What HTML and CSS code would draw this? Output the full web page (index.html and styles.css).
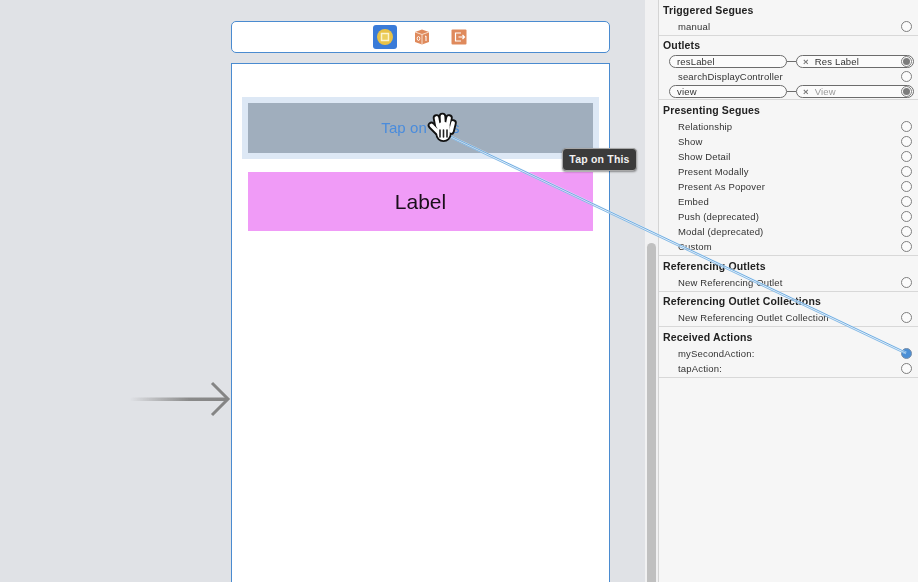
FILE: index.html
```html
<!DOCTYPE html>
<html lang="en">
<head>
  <meta charset="UTF-8">
  <title>Storyboard Connections</title>
  <link rel="stylesheet" href="styles.css">
</head>
<body>
  <div class="app">
    <main class="canvas">
      <svg class="entry-arrow" width="102" height="36" viewBox="0 0 102 36">
        <defs>
          <linearGradient id="arrowFade" x1="0" x2="1" y1="0" y2="0">
            <stop offset="0" stop-color="#8a8a8a" stop-opacity="0"></stop>
            <stop offset="0.6" stop-color="#8a8a8a"></stop>
            <stop offset="1" stop-color="#858585"></stop>
          </linearGradient>
        </defs>
        <rect x="0" y="16.500" width="98" height="3.500" fill="url(#arrowFade)"></rect>
        <path d="M82 2 L98 18 L82 34" fill="none" stroke="#858585" stroke-width="3"></path>
      </svg>

      <div class="scene-dock">
        <span class="dock-icon dock-active">
          <svg width="24" height="24" viewBox="0 0 24 24">
            <circle cx="12" cy="12" r="8" fill="#e9c246"></circle>
            <rect x="8.500" y="8.500" width="7" height="7" fill="#eccf5e" stroke="#fbf3cf" stroke-width="1.500"></rect>
          </svg>
        </span>
        <span class="dock-icon">
          <svg width="18" height="18" viewBox="0 0 18 18">
            <path d="M9 1.500 L16 4 V14 L9 16.500 L2 14 V4 Z" fill="#df8a5c"></path>
            <path d="M9 6.500 V16.500 M2 4 L9 6.500 L16 4" fill="none" stroke="#fbe6d8" stroke-width="0.900"></path>
            <ellipse cx="5.500" cy="10.500" rx="1.300" ry="2" fill="none" stroke="#fff" stroke-width="0.900"></ellipse>
            <path d="M12 8.500 L13 8 V13" fill="none" stroke="#fff" stroke-width="1"></path>
          </svg>
        </span>
        <span class="dock-icon">
          <svg width="18" height="18" viewBox="0 0 18 18">
            <rect x="1.500" y="1.500" width="15" height="15" rx="1" fill="#df8a5c"></rect>
            <path d="M11 5 H5.500 V13 H11 M8.500 9 H14.500 M12.500 7 L14.500 9 L12.500 11" fill="none" stroke="#fff" stroke-width="1.200"></path>
          </svg>
        </span>
      </div>

      <section class="device">
        <div class="button-selection">
          <div class="tap-button">Tap on This</div>
        </div>
        <div class="res-label">Label</div>
      </section>
    </main>

    <div class="scroller"><div class="scroller-thumb"></div></div>

    <aside class="inspector">
      <section class="group">
        <h4>Triggered Segues</h4>
        <div class="row"><span>manual</span><i class="radio"></i></div>
      </section>

      <section class="group group-outlets">
        <h4>Outlets</h4>
        <div class="row row-linked">
          <span class="pill pill-name">resLabel</span><b class="wire"></b>
          <span class="pill pill-target"><span class="target-name"><em>×</em>Res Label</span><i class="radio radio-on"></i></span>
        </div>
        <div class="row"><span>searchDisplayController</span><i class="radio"></i></div>
        <div class="row row-linked">
          <span class="pill pill-name">view</span><b class="wire"></b>
          <span class="pill pill-target target-dim"><span class="target-name"><em>×</em>View</span><i class="radio radio-on"></i></span>
        </div>
      </section>

      <section class="group">
        <h4>Presenting Segues</h4>
        <div class="row"><span>Relationship</span><i class="radio"></i></div>
        <div class="row"><span>Show</span><i class="radio"></i></div>
        <div class="row"><span>Show Detail</span><i class="radio"></i></div>
        <div class="row"><span>Present Modally</span><i class="radio"></i></div>
        <div class="row"><span>Present As Popover</span><i class="radio"></i></div>
        <div class="row"><span>Embed</span><i class="radio"></i></div>
        <div class="row"><span>Push (deprecated)</span><i class="radio"></i></div>
        <div class="row"><span>Modal (deprecated)</span><i class="radio"></i></div>
        <div class="row"><span>Custom</span><i class="radio"></i></div>
      </section>

      <section class="group">
        <h4>Referencing Outlets</h4>
        <div class="row"><span>New Referencing Outlet</span><i class="radio"></i></div>
      </section>

      <section class="group group-tight">
        <h4>Referencing Outlet Collections</h4>
        <div class="row"><span>New Referencing Outlet Collection</span><i class="radio"></i></div>
      </section>

      <section class="group">
        <h4>Received Actions</h4>
        <div class="row"><span>mySecondAction:</span><i class="radio radio-target"></i></div>
        <div class="row"><span>tapAction:</span><i class="radio"></i></div>
      </section>
    </aside>
  </div>

  <svg class="drag-layer" width="918" height="582" viewBox="0 0 918 582">
    <path d="M447 135 L906 353" stroke="#e4f0fa" stroke-width="3" opacity="0.7"></path>
    <path d="M447 134.300 L906 352.300" stroke="#6fade2" stroke-width="1"></path>
    <path d="M446 135.700 L905 353.700" stroke="#6fade2" stroke-width="0.800"></path>
    <g fill="none" stroke-linecap="round">
      <g stroke="#111" stroke-width="7.500">
        <path d="M439 133 L431.500 125.500"></path>
        <path d="M438 126 L436.500 118"></path>
        <path d="M443 126 L442.500 116.500"></path>
        <path d="M447.500 126 L449 118"></path>
        <path d="M451 131 L453 123"></path>
        <path d="M443.500 128 V134" stroke-width="16"></path>
      </g>
      <g stroke="#fff" stroke-width="3.800">
        <path d="M439 133 L431.500 125.500"></path>
        <path d="M438 126 L436.500 118"></path>
        <path d="M443 126 L442.500 116.500"></path>
        <path d="M447.500 126 L449 118"></path>
        <path d="M451 131 L453 123"></path>
        <path d="M443.500 128 V134" stroke-width="12.500"></path>
      </g>
      <path d="M440 130 V137 M443.500 130 V137 M447 130 V137" stroke="#222" stroke-width="1.600"></path>
    </g>
  </svg>

  <div class="drag-tip">Tap on This</div>
</body>
</html>
```

FILE: styles.css
```css
html, body {
  height: 100%;
  margin: 0;
  overflow: hidden;
}

body {
  position: relative;
  font-family: "Liberation Sans", Arial, sans-serif;
  background: #e0e2e6;
}

.app {
  display: flex;
  height: 582px;
  filter: blur(0.4px);
}

.canvas {
  position: relative;
  width: 645px;
  flex: none;
  box-sizing: border-box;
  padding: 21px 35px 0 231px;
  overflow: hidden;
}

.entry-arrow {
  position: absolute;
  left: 130px;
  top: 381px;
}

.scene-dock {
  display: flex;
  align-items: center;
  justify-content: center;
  gap: 13px;
  box-sizing: border-box;
  height: 32px;
  padding-left: 2px;
  background: #fff;
  border: 1px solid #4a8bd0;
  border-radius: 5px;
}

.dock-icon {
  display: flex;
  align-items: center;
  justify-content: center;
  width: 24px;
  height: 24px;
}

.dock-active {
  background: #3a7bd8;
  border-radius: 3px;
}

.device {
  box-sizing: border-box;
  height: 600px;
  margin-top: 10px;
  padding: 33px 16px 0;
  background: #fff;
  border: 1px solid #4a8bd0;
}

.button-selection {
  margin: 0 -6px;
  padding: 6px;
  background: #dde8f5;
}

.tap-button {
  height: 50px;
  line-height: 50px;
  text-align: center;
  font-size: 15px;
  letter-spacing: 0.1px;
  color: #4a8cdc;
  background: #a0aebd;
}

.res-label {
  height: 59px;
  line-height: 59px;
  margin-top: 13px;
  text-align: center;
  font-size: 21px;
  color: #1a0f1a;
  background: #f09bf7;
}

.scroller {
  width: 14px;
  flex: none;
  padding-top: 243px;
  box-sizing: border-box;
  background: #f1f1f2;
  border-right: 1px solid #d4d4d4;
}

.scroller-thumb {
  width: 9px;
  height: 345px;
  margin-left: 2px;
  background: #c0c0c0;
  border-radius: 5px;
}

.inspector {
  flex: 1;
  background: #f6f6f6;
  color: #333;
  font-size: 9.500px;
  letter-spacing: 0.17px;
}

.group {
  padding: 1px 0;
  border-bottom: 1px solid #d8d8d8;
}

.group-outlets {
  padding: 0;
}

.group-tight {
  padding-top: 0;
}

.group h4 {
  height: 18px;
  line-height: 18px;
  margin: 0;
  padding-left: 4px;
  font-size: 10.500px;
  letter-spacing: 0.15px;
  color: #222;
}

.row {
  display: flex;
  align-items: center;
  justify-content: space-between;
  height: 15px;
  padding: 0 7px 0 19px;
}

.row-linked {
  justify-content: flex-start;
  padding: 0 5px 0 10px;
}

.radio {
  display: flex;
  align-items: center;
  justify-content: center;
  box-sizing: border-box;
  width: 11px;
  height: 11px;
  flex: none;
  background: #fbfbfb;
  border: 1px solid #7f7f7f;
  border-radius: 50%;
}

.radio-on::after {
  content: "";
  width: 7px;
  height: 7px;
  background: #7d7d7d;
  border-radius: 50%;
}

.radio-target {
  background: #4a8fd6;
  border: 1.500px solid #7a8ea6;
}

.pill {
  display: flex;
  align-items: center;
  box-sizing: border-box;
  width: 118px;
  height: 13px;
  background: #fbfbfb;
  border: 1px solid #6c6c6c;
  border-radius: 7px;
}

.pill-name {
  padding-left: 7px;
}

.wire {
  width: 9px;
  height: 1px;
  background: #6c6c6c;
}

.pill-target {
  justify-content: space-between;
  padding: 0 1px 0 6px;
}

.target-name em {
  margin-right: 6px;
  font-style: normal;
  font-weight: 700;
  color: #777;
}

.target-dim .target-name {
  color: #9a9a9a;
}

.drag-layer {
  position: absolute;
  left: 0;
  top: 0;
  filter: blur(0.4px);
}

.drag-tip {
  position: absolute;
  left: 562px;
  top: 148px;
  box-sizing: border-box;
  width: 75px;
  height: 23px;
  line-height: 21px;
  text-align: center;
  font-size: 10.500px;
  font-weight: 700;
  letter-spacing: 0.2px;
  color: #f2f2f2;
  background: #3b3b3b;
  border: 1px solid #a8a8a8;
  border-radius: 4px;
  box-shadow: 0 1px 2px rgba(0,0,0,0.4);
}
```
